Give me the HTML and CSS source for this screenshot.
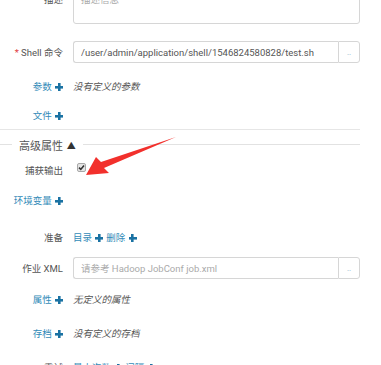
FILE: index.html
```html
<!DOCTYPE html>
<html lang="zh">
<head>
    <meta charset="UTF-8" />
    <title>Shell 动作</title>
    <link rel="stylesheet" href="styles.css">
</head>
<body>

    <form class="action-form" action="#">
        <div class="row row-desc">
            <label class="label label-top">描述</label>
            <div class="field">
                <textarea class="text-area" placeholder="描述信息"></textarea>
            </div>
        </div>

        <div class="row mt-17">
            <label class="label"><span class="req">*</span> Shell 命令</label>
            <div class="field input-group">
                <input type="text" class="text-input" value="/user/admin/application/shell/1546824580828/test.sh" />
                <button type="button" class="pick-btn">..</button>
            </div>
        </div>

        <div class="row mt-12">
            <a class="label link">参数 <i class="plus"></i></a>
            <div class="field empty">没有定义的参数</div>
        </div>

        <div class="row mt-7">
            <a class="label link">文件 <i class="plus"></i></a>
            <div class="field"></div>
        </div>

        <div class="divider"></div>

        <div class="section-head">
            <span class="line line-short"></span>
            <span class="legend">高级属性 <span class="caret">▲</span></span>
            <span class="line"></span>
        </div>

        <div class="row mt-7">
            <label class="label">捕获输出</label>
            <div class="field">
                <span class="check"><svg viewBox="0 0 9 9" width="9" height="9"><path d="M2 4.6 L3.8 6.4 L7 2.4" fill="none" stroke="#333" stroke-width="1.6" /></svg></span>
            </div>
        </div>

        <div class="row mt-8">
            <a class="label link">环境变量 <i class="plus"></i></a>
            <div class="field"></div>
        </div>

        <div class="row mt-15">
            <label class="label">准备</label>
            <div class="field links">
                <a class="link">目录 <i class="plus"></i></a>
                <a class="link">删除 <i class="plus"></i></a>
            </div>
        </div>

        <div class="row mt-9">
            <label class="label">作业 XML</label>
            <div class="field input-group">
                <input type="text" class="text-input" placeholder="请参考 Hadoop JobConf job.xml" />
                <button type="button" class="pick-btn">..</button>
            </div>
        </div>

        <div class="row mt-9">
            <a class="label link">属性 <i class="plus"></i></a>
            <div class="field empty">无定义的属性</div>
        </div>

        <div class="row mt-12">
            <a class="label link">存档 <i class="plus"></i></a>
            <div class="field empty">没有定义的存档</div>
        </div>

        <div class="row mt-12">
            <label class="label">重试</label>
            <div class="field links">
                <a class="link">最大次数 <i class="plus"></i></a>
                <a class="link">间隔 <i class="plus"></i></a>
            </div>
        </div>
    </form>

    <!-- red arrow pointing at the checkbox -->
    <svg class="arrow" width="381" height="365" viewBox="0 0 381 365">
        <polygon points="176,137 101,162 96,157 86,175 109,173 104,168" fill="#f2302c" />
    </svg>

</body>
</html>
```

FILE: styles.css
```css
body {
    margin: 0;
    font-family: Roboto, "Noto Sans CJK SC", sans-serif;
    font-size: 9.5px;
    color: #555;
    background: #fff;
    overflow: hidden;
    position: relative;
}

.action-form {
    margin-top: -17px;
    padding-right: 21px;
}

.row {
    display: flex;
    align-items: center;
    min-height: 22px;
}

.row-desc {
    align-items: flex-start;
}

.mt-7 { margin-top: 7px; }
.mt-8 { margin-top: 8px; }
.mt-9 { margin-top: 9px; }
.mt-12 { margin-top: 12px; }
.mt-15 { margin-top: 15px; }
.mt-17 { margin-top: 17px; }

.label {
    width: 63px;
    flex: none;
    text-align: right;
    color: #555;
    white-space: nowrap;
}

.label-top {
    padding-top: 9px;
}

.req {
    color: #e0393e;
}

.field {
    flex: 1;
    margin-left: 10px;
    display: flex;
    align-items: center;
    min-width: 0;
}

.link {
    color: #338bb8;
    text-decoration: none;
    white-space: nowrap;
}

.links {
    gap: 3px;
}

.plus {
    display: inline-block;
    width: 8px;
    height: 8px;
    vertical-align: -1px;
    margin-left: 1px;
    background:
        linear-gradient(#1a72a3, #1a72a3) center / 8px 2.6px no-repeat,
        linear-gradient(#1a72a3, #1a72a3) center / 2.6px 8px no-repeat;
}

.empty {
    font-style: italic;
    color: #555;
}

.text-area {
    width: 100%;
    height: 41px;
    box-sizing: border-box;
    border: 1px solid #d6d6d6;
    border-radius: 3px;
    padding: 8px 7px 4px;
    font: inherit;
    resize: none;
}

.text-area::placeholder,
.text-input::placeholder {
    color: #aaa;
}

.input-group {
    height: 22px;
}

.text-input {
    flex: 1;
    min-width: 0;
    height: 22px;
    box-sizing: border-box;
    border: 1px solid #d6d6d6;
    border-right: none;
    border-radius: 3px 0 0 3px;
    padding: 0 7px;
    font: inherit;
    color: #555;
}

.pick-btn {
    width: 22px;
    height: 22px;
    box-sizing: border-box;
    border: 1px solid #d6d6d6;
    border-radius: 0 3px 3px 0;
    background: #fff;
    color: #8fb3cc;
    font: inherit;
    font-size: 8px;
    padding: 0;
}

.divider {
    margin-top: 3px;
    border-top: 1px solid #e6e6e6;
}

.section-head {
    margin-top: 7px;
    height: 15px;
    display: flex;
    align-items: center;
}

.line {
    flex: 1;
    border-top: 1px solid #e2e2e2;
}

.line-short {
    flex: none;
    width: 12px;
}

.legend {
    padding: 0 7px;
    font-size: 11px;
    color: #555;
    white-space: nowrap;
}

.caret {
    font-size: 9px;
    margin-left: 1px;
    color: #333;
    vertical-align: 1px;
}

.check {
    display: inline-block;
    width: 9px;
    height: 9px;
    box-sizing: border-box;
    margin: -6px 0 0 4px;
    background: #e4e4e4;
    border: 1px solid #a8a8a8;
    border-radius: 2px;
    overflow: hidden;
}

.check svg {
    display: block;
    margin: -1px;
}

.arrow {
    position: absolute;
    left: 0;
    top: 0;
    pointer-events: none;
}
```
